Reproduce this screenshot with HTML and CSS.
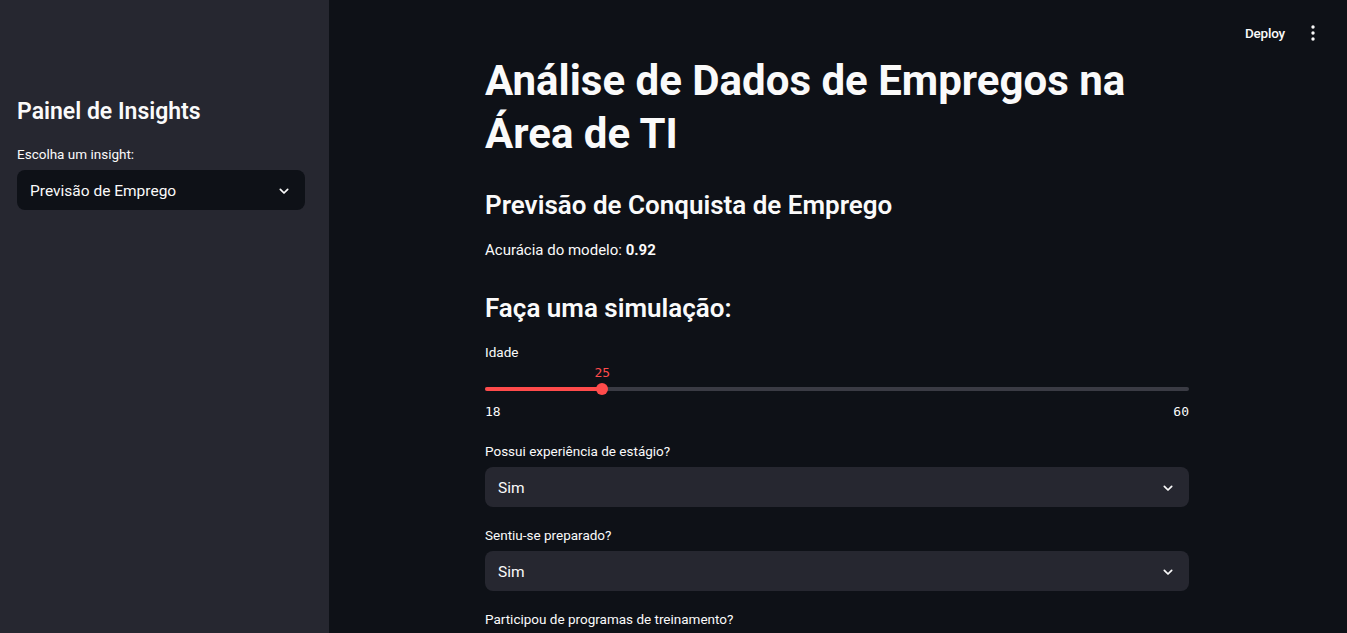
FILE: index.html
```html
<!DOCTYPE html>
<html lang="pt">
<head>
<meta charset="utf-8">
<title>Análise de Dados de Empregos na Área de TI</title>
<link rel="stylesheet" href="styles.css">
</head>
<body>
<div class="app">
  <aside class="sidebar">
    <h2 class="side-title">Painel de Insights</h2>
    <div class="field-label">Escolha um insight:</div>
    <div class="select select-dark">
      <span>Previsão de Emprego</span>
      <svg class="chev" viewBox="0 0 24 24" width="16" height="16"><path d="M6.5 9.5l5.5 5.5 5.5-5.5" fill="none" stroke="#fafafa" stroke-width="2.6" stroke-linecap="round" stroke-linejoin="round"/></svg>
    </div>
  </aside>
  <main class="main">
    <header class="topbar">
      <span class="deploy">Deploy</span>
      <svg class="kebab" viewBox="0 0 6 18" width="6" height="18"><circle cx="3" cy="3" r="1.7" fill="#fafafa"/><circle cx="3" cy="9" r="1.7" fill="#fafafa"/><circle cx="3" cy="15" r="1.7" fill="#fafafa"/></svg>
    </header>
    <div class="content">
      <h1 class="title">Análise de Dados de Empregos na Área de TI</h1>
      <h3 class="sub">Previsão de Conquista de Emprego</h3>
      <p class="acc">Acurácia do modelo: <strong>0.92</strong></p>
      <h3 class="sub sim">Faça uma simulação:</h3>

      <div class="field-label">Idade</div>
      <div class="slider">
        <div class="slider-value-row"><span class="slider-value" style="left: 16.67%">25</span></div>
        <div class="track">
          <div class="track-fill" style="width: 16.67%"></div>
          <div class="thumb" style="left: 16.67%"></div>
        </div>
        <div class="ticks"><span>18</span><span>60</span></div>
      </div>

      <div class="field-label">Possui experiência de estágio?</div>
      <div class="select">
        <span>Sim</span>
        <svg class="chev" viewBox="0 0 24 24" width="16" height="16"><path d="M6.5 9.5l5.5 5.5 5.5-5.5" fill="none" stroke="#fafafa" stroke-width="2.6" stroke-linecap="round" stroke-linejoin="round"/></svg>
      </div>

      <div class="field-label">Sentiu-se preparado?</div>
      <div class="select">
        <span>Sim</span>
        <svg class="chev" viewBox="0 0 24 24" width="16" height="16"><path d="M6.5 9.5l5.5 5.5 5.5-5.5" fill="none" stroke="#fafafa" stroke-width="2.6" stroke-linecap="round" stroke-linejoin="round"/></svg>
      </div>

      <div class="field-label">Participou de programas de treinamento?</div>
    </div>
  </main>
</div>
</body>
</html>
```

FILE: styles.css
```css
* { box-sizing: border-box; }
html, body {
  margin: 0;
  padding: 0;
  height: 100%;
  overflow: hidden;
}
body {
  font-family: "Roboto", "Liberation Sans", sans-serif;
  color: #fafafa;
  background: #0e1117;
}
.app {
  display: flex;
  height: 633px;
}
.sidebar {
  width: 329px;
  flex: none;
  background: #262730;
  padding: 97px 24px 0 17px;
}
.side-title {
  margin: 0 0 17px;
  font-size: 23px;
  line-height: 30px;
  font-weight: 600;
}
.main {
  flex: 1;
  position: relative;
}
.topbar {
  position: absolute;
  top: 0;
  right: 0;
  height: 66px;
  display: flex;
  align-items: center;
  gap: 25px;
  padding-right: 31px;
}
.deploy {
  font-size: 13.5px;
  font-weight: 500;
  letter-spacing: -0.2px;
}
.kebab { display: block; }
.content {
  width: 704px;
  margin-left: calc(50% - 353px);
  padding-top: 54px;
}
.title {
  margin: 0;
  font-size: 42px;
  line-height: 53px;
  font-weight: 700;
}
.sub {
  margin: 28px 0 0;
  font-size: 26px;
  line-height: 34px;
  font-weight: 600;
}
.acc {
  margin: 16px 0 0;
  font-size: 15px;
  line-height: 24px;
}
.sub.sim { margin-top: 29px; }
.acc strong { font-weight: 700; }
.field-label {
  font-size: 13.5px;
  line-height: 20px;
  margin-bottom: 6px;
}
.sim + .field-label { margin-top: 17px; margin-bottom: 0; }
.select {
  height: 40px;
  border-radius: 8px;
  background: #262730;
  display: flex;
  align-items: center;
  justify-content: space-between;
  padding: 1px 13px 0 13px;
  font-size: 15.5px;
  margin-bottom: 18px;
}
.select-dark { background: #0e1117; }
.chev { display: block; }
.slider {
  margin-bottom: 19px;
}
.slider-value-row {
  position: relative;
  height: 20px;
  margin-top: 1px;
}
.slider-value {
  position: absolute;
  top: 0;
  transform: translateX(-50%);
  font-family: "DejaVu Sans Mono", "Liberation Mono", monospace;
  font-size: 13px;
  line-height: 20px;
  color: #ff4b4b;
}
.track {
  position: relative;
  height: 4px;
  margin: 4px 0 0;
  border-radius: 2px;
  background: #3a3b44;
}
.track-fill {
  height: 100%;
  border-radius: 2px;
  background: #ff4b4b;
}
.thumb {
  position: absolute;
  top: 50%;
  width: 12px;
  height: 12px;
  border-radius: 50%;
  background: #ff4b4b;
  transform: translate(-50%, -50%);
}
.ticks {
  display: flex;
  justify-content: space-between;
  margin-top: 11px;
  font-family: "DejaVu Sans Mono", "Liberation Mono", monospace;
  font-size: 13px;
  line-height: 20px;
}
```
